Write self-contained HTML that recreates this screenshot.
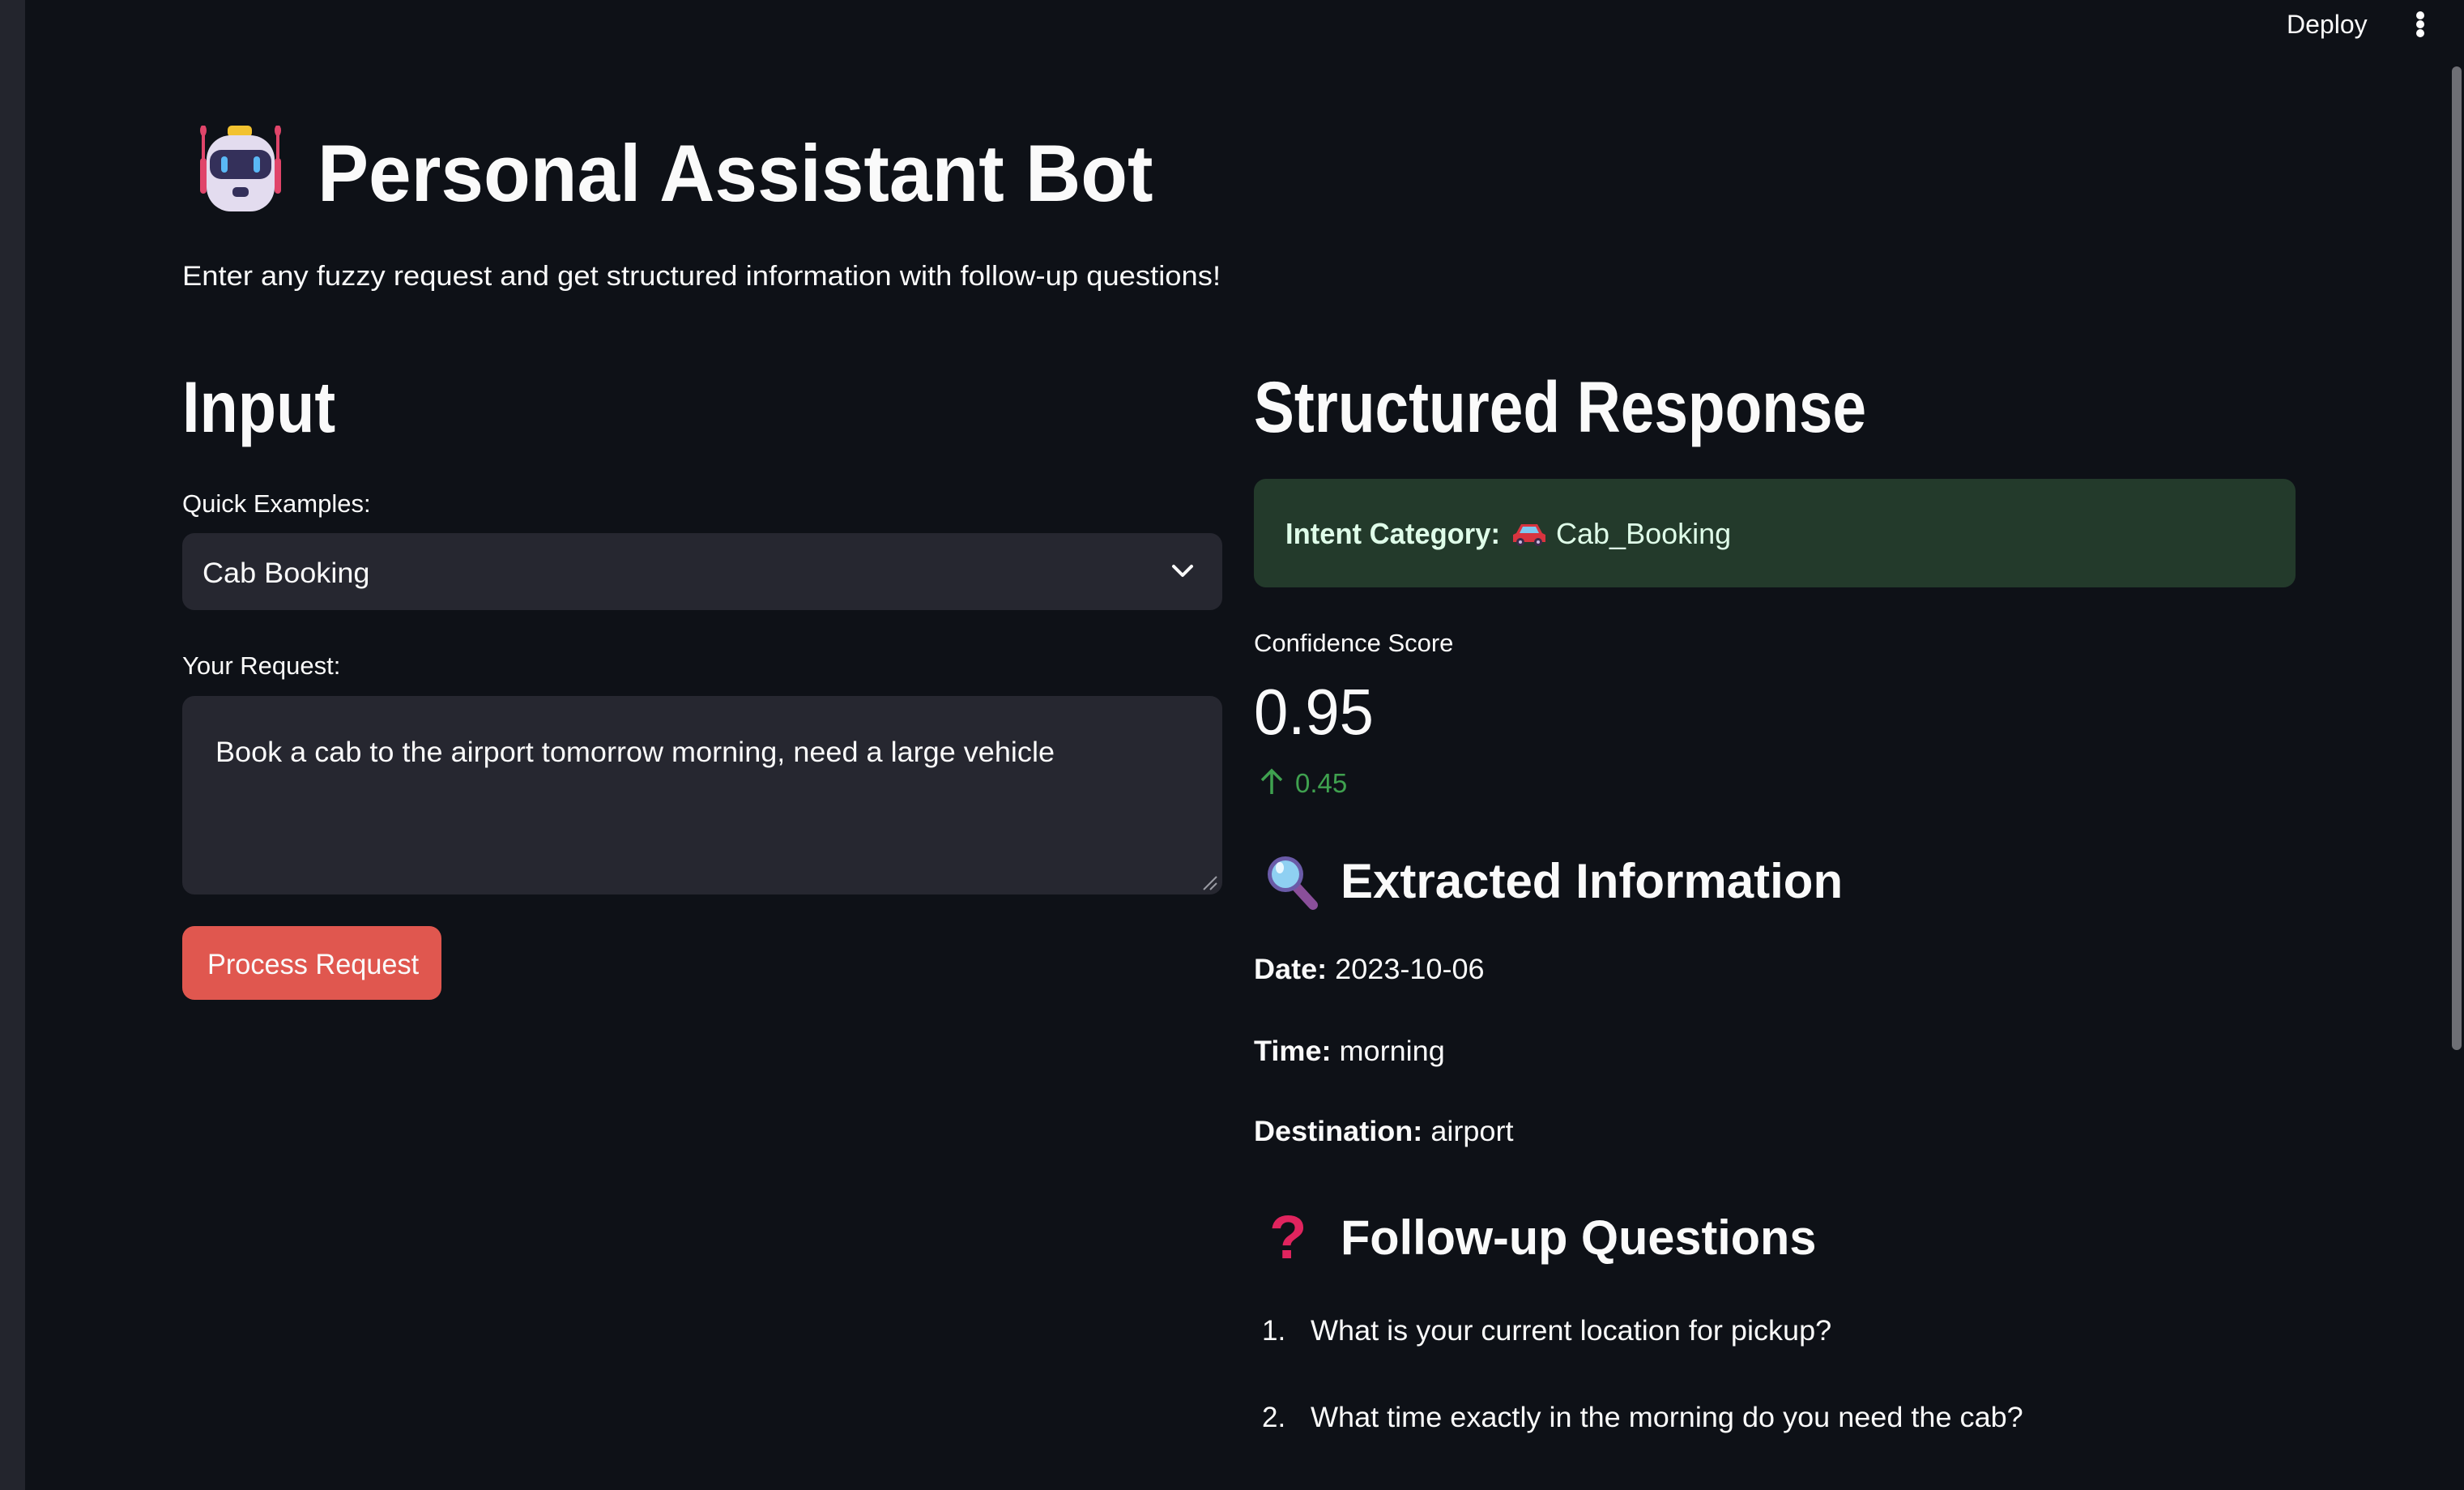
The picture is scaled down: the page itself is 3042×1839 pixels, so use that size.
<!DOCTYPE html>
<html><head><meta charset="utf-8"><style>
html,body{margin:0;padding:0}
body{width:3042px;height:1839px;background:#0e1117;position:relative;overflow:hidden;font-family:"Liberation Sans",sans-serif;color:#fafafa}
.t{position:absolute;white-space:nowrap;line-height:1;transform-origin:left center}
.b{font-weight:bold;transform:scaleX(.84)}
.r{transform:scaleX(1.03)}
</style></head><body>
<div style="position:absolute;left:0;top:0;width:31px;height:1839px;background:#23252d"></div>
<div style="position:absolute;left:3027px;top:82px;width:12px;height:1214px;background:#6e6f75;border-radius:6px"></div>
<div class="t" style="left:2823px;top:14px;font-size:32px">Deploy</div>
<div style="position:absolute;left:2983px;top:14px;width:10px;height:10px;border-radius:50%;background:#fff"></div>
<div style="position:absolute;left:2983px;top:25px;width:10px;height:10px;border-radius:50%;background:#fff"></div>
<div style="position:absolute;left:2983px;top:36px;width:10px;height:10px;border-radius:50%;background:#fff"></div>

<svg style="position:absolute;left:241px;top:155px" width="112" height="106" viewBox="0 0 112 106">
<rect x="6" y="40" width="8" height="44" rx="4" fill="#e0456a"/><rect x="98" y="40" width="8" height="44" rx="4" fill="#e0456a"/>
<rect x="8" y="2" width="4" height="40" fill="#e0456a"/><rect x="100" y="2" width="4" height="40" fill="#e0456a"/>
<ellipse cx="10" cy="6" rx="4" ry="7" fill="#e0456a"/><ellipse cx="102" cy="6" rx="4" ry="7" fill="#e0456a"/>
<rect x="40" y="0" width="30" height="14" rx="5" fill="#f2c230"/>
<rect x="14" y="12" width="84" height="94" rx="30" fill="#e3dcef"/>
<rect x="18" y="30" width="76" height="36" rx="14" fill="#34305a"/>
<rect x="32" y="38" width="8" height="20" rx="4" fill="#5ab8f5"/><rect x="72" y="38" width="8" height="20" rx="4" fill="#5ab8f5"/>
<rect x="46" y="76" width="20" height="12" rx="5" fill="#34305a"/>
</svg>
<div class="t" style="left:392px;top:164px;font-size:99px;font-weight:bold;transform:scaleX(.955)">Personal Assistant Bot</div>
<div class="t" style="left:225px;top:324px;font-size:34px;transform:scaleX(1.07)">Enter any fuzzy request and get structured information with follow-up questions!</div>

<div class="t" style="left:225px;top:458px;font-size:89px;font-weight:bold;transform:scaleX(.87)">Input</div>
<div class="t b" style="left:1548px;top:458px;font-size:89px">Structured Response</div>

<div class="t" style="left:225px;top:606px;font-size:31px">Quick Examples:</div>
<div style="position:absolute;left:225px;top:658px;width:1284px;height:95px;background:#262730;border-radius:15px"></div>
<div class="t r" style="left:250px;top:690px;font-size:35px">Cab Booking</div>
<svg style="position:absolute;left:1445px;top:695px" width="30" height="20" viewBox="0 0 30 20"><path d="M4 4 L15 15 L26 4" stroke="#fafafa" stroke-width="4" fill="none" stroke-linecap="round" stroke-linejoin="round"/></svg>

<div class="t" style="left:225px;top:806px;font-size:31px">Your Request:</div>
<div style="position:absolute;left:225px;top:859px;width:1284px;height:245px;background:#262730;border-radius:15px"></div>
<div class="t r" style="left:266px;top:911px;font-size:35px">Book a cab to the airport tomorrow morning, need a large vehicle</div>
<svg style="position:absolute;left:1484px;top:1080px" width="20" height="20"><path d="M2 18 L18 2 M10 18 L18 10" stroke="#9a9ba3" stroke-width="2"/></svg>

<div style="position:absolute;left:225px;top:1143px;width:320px;height:91px;background:#e0574f;border-radius:15px"></div>
<div class="t" style="left:256px;top:1173px;font-size:35px;transform:scaleX(.98)">Process Request</div>

<div style="position:absolute;left:1548px;top:591px;width:1286px;height:134px;background:#233a2b;border-radius:15px"></div>
<div class="t" style="left:1587px;top:641px;font-size:36px;color:#dffde9;font-weight:bold;transform:scaleX(.96)">Intent Category:</div>
<svg style="position:absolute;left:1866px;top:644px" width="44" height="30" viewBox="0 0 44 30">
<path d="M6 14 L12 3 L32 3 L38 14 L42 16 L42 25 L2 25 L2 16 Z" fill="#d8343f"/>
<path d="M14 6 L30 6 L34 14 L10 14 Z" fill="#7ec8f0"/>
<circle cx="11" cy="25" r="5" fill="#3a2a4a"/><circle cx="33" cy="25" r="5" fill="#3a2a4a"/>
<circle cx="11" cy="25" r="2" fill="#c9b8e0"/><circle cx="33" cy="25" r="2" fill="#c9b8e0"/></svg>
<div class="t" style="left:1921px;top:641px;font-size:36px;color:#dffde9">Cab_Booking</div>

<div class="t" style="left:1548px;top:778px;font-size:31px">Confidence Score</div>
<div class="t" style="left:1548px;top:839px;font-size:80px;transform:scaleX(.95)">0.95</div>
<svg style="position:absolute;left:1554px;top:948px" width="32" height="34" viewBox="0 0 32 34"><path d="M16 32 L16 3 M4 15 L16 3 L28 15" stroke="#3fa14f" stroke-width="3.5" fill="none"/></svg>
<div class="t" style="left:1599px;top:950px;font-size:33px;color:#3fa14f">0.45</div>

<svg style="position:absolute;left:1561px;top:1053px" width="70" height="70" viewBox="0 0 70 70">
<path d="M38 40 L60 64" stroke="#8a4f9a" stroke-width="12" stroke-linecap="round"/>
<circle cx="26" cy="26" r="22" fill="#6a5ba8"/><circle cx="26" cy="26" r="17" fill="#8fd0f2"/>
<ellipse cx="19" cy="18" rx="5" ry="7" fill="#e8f7ff"/></svg>
<div class="t" style="left:1655px;top:1058px;font-size:60px;font-weight:bold;transform:scaleX(1)">Extracted Information</div>

<div class="t r" style="left:1548px;top:1179px;font-size:35px"><b>Date:</b> 2023-10-06</div>
<div class="t r" style="left:1548px;top:1280px;font-size:35px"><b>Time:</b> morning</div>
<div class="t r" style="left:1548px;top:1379px;font-size:35px"><b>Destination:</b> airport</div>

<div class="t" style="left:1567px;top:1490px;font-size:76px;font-weight:bold;color:#e0245e">?</div>
<div class="t" style="left:1655px;top:1498px;font-size:60px;font-weight:bold;transform:scaleX(.99)">Follow-up Questions</div>

<div class="t" style="left:1558px;top:1625px;font-size:35px">1.</div>
<div class="t r" style="left:1618px;top:1625px;font-size:35px">What is your current location for pickup?</div>
<div class="t" style="left:1558px;top:1732px;font-size:35px">2.</div>
<div class="t r" style="left:1618px;top:1732px;font-size:35px">What time exactly in the morning do you need the cab?</div>
</body></html>
